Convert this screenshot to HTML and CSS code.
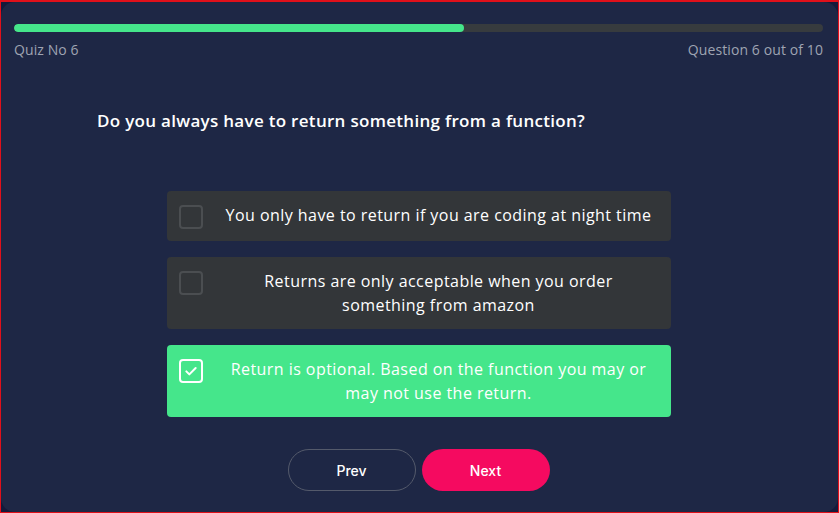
FILE: index.html
```html
<!DOCTYPE html>
<html>
<head>
<meta charset="utf-8">
<link rel="stylesheet" href="styles.css">
</head>
<body>
<div class="frame">
  <div class="card">
    <div class="progress"><div class="progress-fill" style="width:55.6%"></div></div>
    <div class="meta">
      <span>Quiz No 6</span>
      <span>Question 6 out of 10</span>
    </div>
    <h1 class="question">Do you always have to return something from a function?</h1>
    <div class="options">
      <div class="option">
        <span class="check"></span>
        <span class="opt-text">You only have to return if you are coding at night time</span>
      </div>
      <div class="option">
        <span class="check"></span>
        <span class="opt-text">Returns are only acceptable when you order something from amazon</span>
      </div>
      <div class="option selected">
        <span class="check">
          <svg viewBox="0 0 24 24" width="16" height="16"><path d="M5 12.5l4.5 4.5L19 7.5" fill="none" stroke="#fff" stroke-width="3" stroke-linecap="round" stroke-linejoin="round"/></svg>
        </span>
        <span class="opt-text">Return is optional. Based on the function you may or may not use the return.</span>
      </div>
    </div>
    <div class="buttons">
      <button class="btn btn-prev">Prev</button>
      <button class="btn btn-next">Next</button>
    </div>
  </div>
</div>
</body>
</html>
```
FILE: styles.css
```css
* { box-sizing: border-box; }
html, body { margin: 0; padding: 0; }
body {
  font-family: "Open Sans", "DejaVu Sans", sans-serif;
  background: #161a3c;
}
.frame {
  width: 839px;
  height: 513px;
  border: 1px solid #e0101a;
  border-top-width: 2px;
  background: #151a3b;
}
.card {
  height: 100%;
  background: #1e2745;
  border-radius: 14px;
  padding: 22px 15px 0 13px;
  display: flex;
  flex-direction: column;
}
.progress {
  height: 8px;
  background: #373b3e;
  border-radius: 4px;
  overflow: hidden;
}
.progress-fill {
  height: 100%;
  background: #45e68b;
  border-radius: 4px;
}
.meta {
  margin-top: 8px;
  display: flex;
  justify-content: space-between;
  color: #9fa4b2;
  font-size: 14px;
  line-height: 20px;
  letter-spacing: 0.1px;
}
.question {
  margin: 49px 0 0 83px;
  color: #fff;
  font-size: 17px;
  font-weight: 600;
  line-height: 24px;
  letter-spacing: 0.3px;
}
.options {
  margin: 58px auto 0;
  width: 504px;
  display: flex;
  flex-direction: column;
  gap: 16px;
}
.option {
  display: flex;
  align-items: flex-start;
  gap: 16px;
  padding: 12px 12px;
  background: #333639;
  border-radius: 4px;
  color: #fff;
  font-size: 16px;
  line-height: 24px;
  letter-spacing: 0.45px;
}
.option .check {
  flex: none;
  width: 24px;
  height: 24px;
  margin-top: 2px;
  border: 2px solid #4b4e51;
  border-radius: 4px;
  display: flex;
  align-items: center;
  justify-content: center;
}
.option .opt-text {
  flex: 1;
  padding: 0 5px;
  text-align: center;
}
.option.selected {
  background: #45e68b;
}
.option.selected .check {
  border-color: #fff;
}
.buttons {
  margin-top: 32px;
  display: flex;
  justify-content: center;
  gap: 6px;
}
.btn {
  width: 128px;
  height: 42px;
  border-radius: 21px;
  font-family: "Inter", "Open Sans", sans-serif;
  font-size: 14px;
  font-weight: 500;
  color: #fff;
  cursor: pointer;
}
.btn-prev {
  background: transparent;
  border: 1px solid #545a6b;
}
.btn-next {
  background: #f50a60;
  border: none;
}
```
